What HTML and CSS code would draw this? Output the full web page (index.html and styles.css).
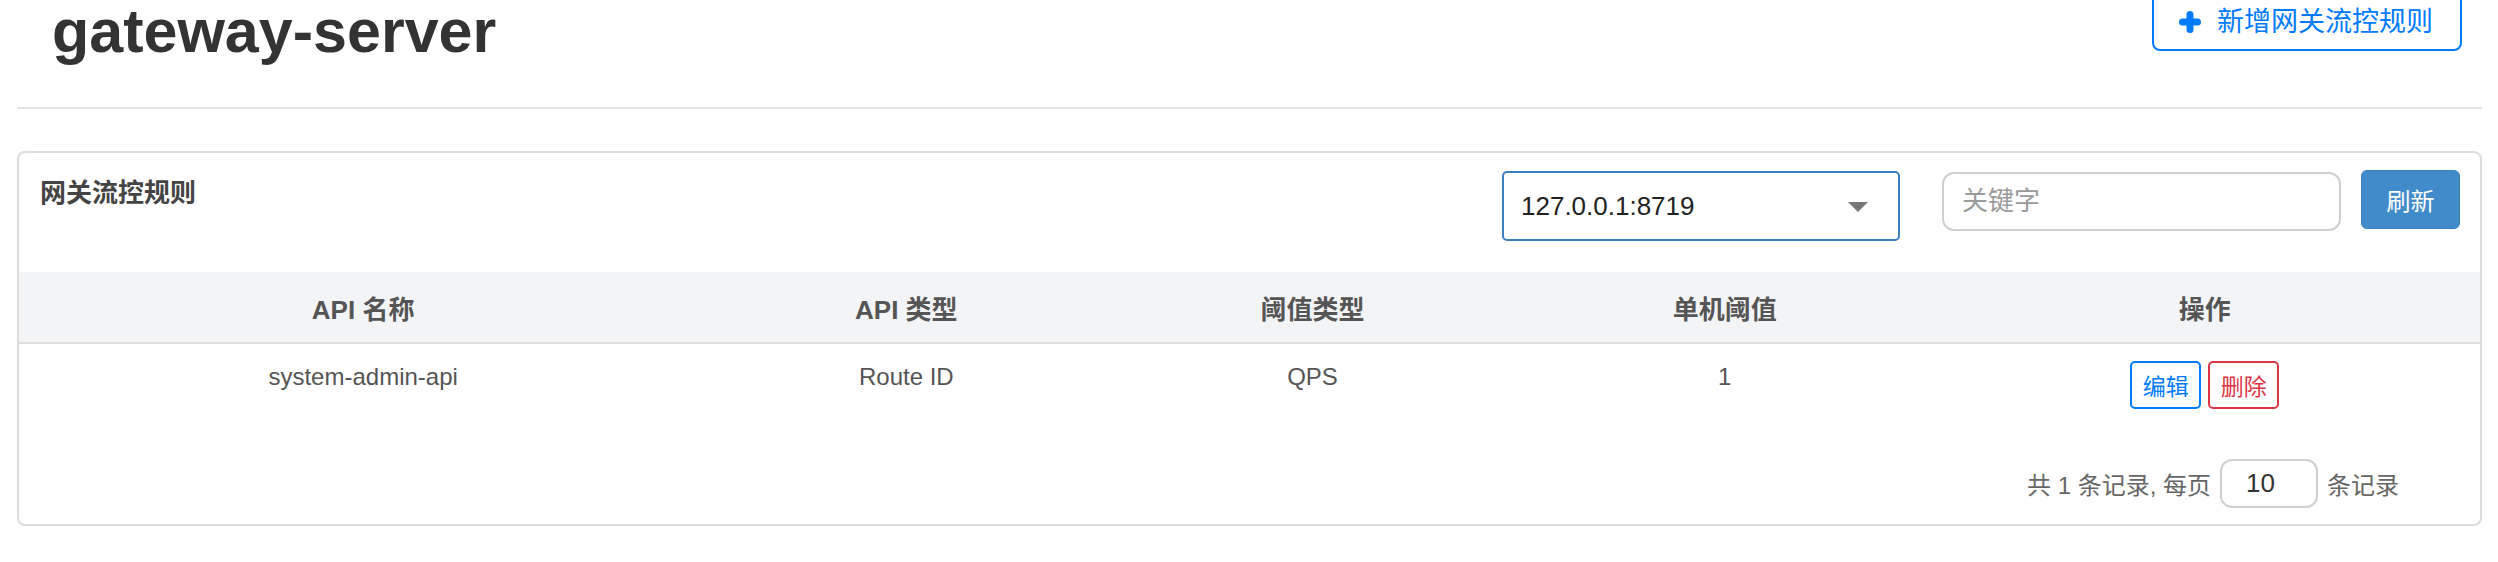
FILE: index.html
```html
<!DOCTYPE html>
<html lang="zh-CN">
<head>
<meta charset="utf-8">
<title>gateway-server</title>
<link rel="stylesheet" href="styles.css">
</head>
<body>
<div class="page">
  <div class="page-header">
    <h1 class="page-title">gateway-server</h1>
    <button class="btn-add" type="button">
      <svg class="plus-icon" width="22" height="22" viewBox="0 0 22 22" aria-hidden="true">
        <path d="M11 3.5 V18.5 M3.5 11 H18.5" stroke="#007bff" stroke-width="7" stroke-linecap="round" fill="none"/>
      </svg>
      <span>新增网关流控规则</span>
    </button>
  </div>

  <div class="panel">
    <div class="toolbar">
      <div class="panel-title">网关流控规则</div>
      <div class="toolbar-controls">
        <div class="machine-select">
          <span>127.0.0.1:8719</span>
          <svg class="caret" width="20" height="10" viewBox="0 0 20 10" aria-hidden="true">
            <path d="M0 0 H20 L10 10 Z" fill="#777"/>
          </svg>
        </div>
        <input class="search-input" type="text" placeholder="关键字">
        <button class="btn-refresh" type="button">刷新</button>
      </div>
    </div>

    <table class="rules-table">
      <colgroup>
        <col class="col-name">
        <col class="col-type">
        <col class="col-grade">
        <col class="col-count">
        <col class="col-ops">
      </colgroup>
      <thead>
        <tr>
          <th>API 名称</th>
          <th>API 类型</th>
          <th>阈值类型</th>
          <th>单机阈值</th>
          <th>操作</th>
        </tr>
      </thead>
      <tbody>
        <tr>
          <td>system-admin-api</td>
          <td>Route ID</td>
          <td>QPS</td>
          <td>1</td>
          <td>
            <div class="ops">
              <button class="btn-edit" type="button">编辑</button>
              <button class="btn-delete" type="button">删除</button>
            </div>
          </td>
        </tr>
      </tbody>
    </table>

    <div class="pager">
      <span>共 1 条记录, 每页</span>
      <input class="page-size" type="text" value="10">
      <span>条记录</span>
    </div>
  </div>
</div>
</body>
</html>
```

FILE: styles.css
```css
* {
  box-sizing: border-box;
}

html, body {
  margin: 0;
  padding: 0;
  background: #ffffff;
}

body {
  font-family: "Liberation Sans", "Noto Sans CJK SC", sans-serif;
  color: #333;
  overflow: hidden;
}

.page {
  padding: 0 16px 0 17px;
}

.page-header {
  display: flex;
  justify-content: space-between;
  align-items: flex-start;
  padding: 0 20px 45px 35px;
  border-bottom: 2px solid #e4e4e4;
}

.page-title {
  margin: 0;
  font-size: 61px;
  line-height: 62px;
  font-weight: bold;
  color: #333;
}

.btn-add {
  display: flex;
  align-items: center;
  gap: 16px;
  height: 58px;
  margin-top: -7px;
  padding: 0 27px 0 25px;
  background: #fff;
  border: 2px solid #007bff;
  border-radius: 8px;
  color: #007bff;
  font-family: "Liberation Sans", "Noto Sans CJK SC", sans-serif;
  font-size: 27px;
  line-height: 1;
}

.plus-icon {
  display: block;
  flex: none;
}

.panel {
  margin-top: 42px;
  border: 2px solid #dcdcdc;
  border-radius: 8px;
  overflow: hidden;
  height: 375px;
}

.toolbar {
  display: flex;
  justify-content: space-between;
  align-items: flex-start;
  padding: 18px 20px 31px 21px;
}

.panel-title {
  margin-top: 2px;
  font-size: 26px;
  line-height: 40px;
  font-weight: bold;
  color: #444;
}

.toolbar-controls {
  display: flex;
  align-items: flex-start;
}

.machine-select {
  display: flex;
  align-items: center;
  justify-content: space-between;
  width: 398px;
  height: 70px;
  padding: 0 30px 0 17px;
  border: 2px solid #3d7fc1;
  border-radius: 5px;
  font-size: 26px;
  color: #222;
}

.caret {
  display: block;
  margin-top: 2px;
}

.search-input {
  width: 399px;
  height: 59px;
  margin: 1px 0 0 42px;
  padding: 0 18px;
  border: 2px solid #cfcfcf;
  border-radius: 12px;
  font-family: "Liberation Sans", "Noto Sans CJK SC", sans-serif;
  font-size: 26px;
  color: #333;
  outline: none;
}

.search-input::placeholder {
  color: #9a9a9a;
}

.btn-refresh {
  width: 99px;
  height: 59px;
  margin: -1px 0 0 20px;
  background: #428bca;
  border: 1px solid #3a7fbd;
  border-radius: 6px;
  color: #fff;
  font-family: "Liberation Sans", "Noto Sans CJK SC", sans-serif;
  font-size: 24px;
}

.rules-table {
  width: 100%;
  border-collapse: collapse;
  table-layout: fixed;
}

.col-name { width: 688px; }
.col-type { width: 398px; }
.col-grade { width: 414px; }
.col-count { width: 410px; }
.col-ops { width: 550px; }

.rules-table th {
  height: 71px;
  background: #f3f4f6;
  border-bottom: 2px solid #dedede;
  font-size: 26px;
  font-weight: bold;
  color: #555;
  text-align: center;
  vertical-align: middle;
  padding: 0;
}

.rules-table td {
  padding: 15px 0 15px;
  font-size: 24px;
  line-height: 36px;
  color: #555;
  text-align: center;
  vertical-align: top;
}

.ops {
  display: flex;
  justify-content: center;
  gap: 7px;
  padding-top: 2px;
}

.btn-edit,
.btn-delete {
  width: 71px;
  height: 48px;
  padding: 0;
  background: #fff;
  border-radius: 5px;
  font-family: "Liberation Sans", "Noto Sans CJK SC", sans-serif;
  font-size: 23px;
}

.btn-edit {
  border: 2px solid #007bff;
  color: #007bff;
}

.btn-delete {
  border: 2px solid #dc3545;
  color: #dc3545;
}

.pager {
  display: flex;
  justify-content: flex-end;
  align-items: center;
  gap: 9px;
  padding: 35px 81px 0 0;
  font-size: 24px;
  color: #666;
}

.page-size {
  width: 98px;
  height: 49px;
  padding: 0 0 0 24px;
  border: 2px solid #cfcfcf;
  border-radius: 12px;
  font-family: "Liberation Sans", "Noto Sans CJK SC", sans-serif;
  font-size: 26px;
  color: #333;
  outline: none;
}
```
